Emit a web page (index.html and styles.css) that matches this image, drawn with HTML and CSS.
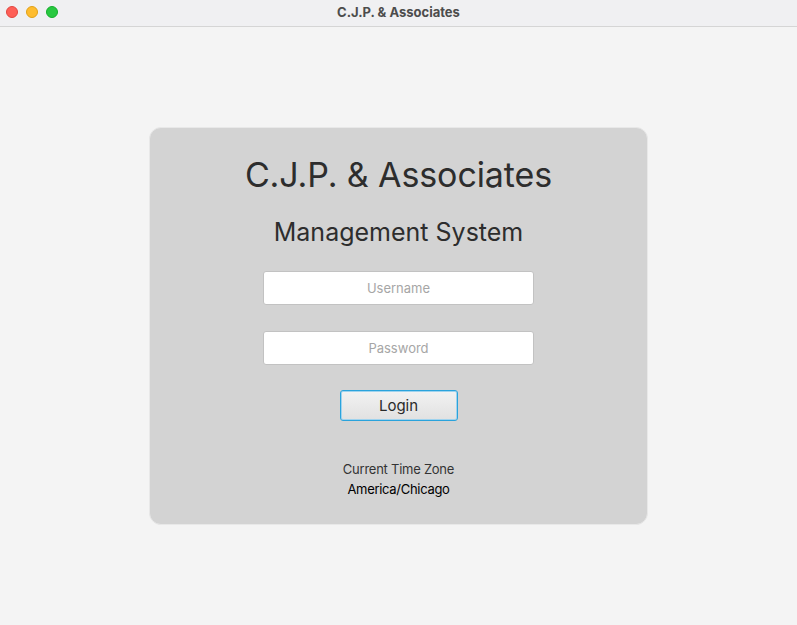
FILE: index.html
```html
<!DOCTYPE html>
<html>
<head>
<meta charset="utf-8">
<link rel="stylesheet" href="styles.css">
</head>
<body>
<div class="window">
  <div class="titlebar">
    <div class="lights">
      <span class="light red"></span>
      <span class="light yellow"></span>
      <span class="light green"></span>
    </div>
    <div class="wtitle">C.J.P. &amp; Associates</div>
  </div>
  <div class="content">
    <div class="card">
      <div class="title">C.J.P. &amp; Associates</div>
      <div class="subtitle">Management System</div>
      <input class="field user" type="text" placeholder="Username">
      <input class="field pass" type="password" placeholder="Password">
      <button class="login">Login</button>
      <div class="tzlabel">Current Time Zone</div>
      <div class="tz">America/Chicago</div>
    </div>
  </div>
</div>
</body>
</html>
```
FILE: styles.css
```css
html, body {
  margin: 0;
  padding: 0;
}
body {
  font-family: "Inter", "Roboto", sans-serif;
  background: #f4f4f4;
}
.window {
  width: 797px;
  height: 625px;
  display: flex;
  flex-direction: column;
}
.titlebar {
  height: 26px;
  background: #f0f0f2;
  border-bottom: 1px solid #d5d5d5;
  display: flex;
  align-items: center;
  justify-content: center;
  position: relative;
}
.lights {
  position: absolute;
  left: 6px;
  top: 6px;
  display: flex;
  gap: 8px;
}
.light {
  width: 12px;
  height: 12px;
  border-radius: 50%;
  box-sizing: border-box;
}
.red { background: #fe5f57; border: 0.5px solid #e2463f; }
.yellow { background: #febc2e; border: 0.5px solid #e1a116; }
.green { background: #28c840; border: 0.5px solid #14ae2b; }
.wtitle {
  font-size: 13px;
  font-weight: 700;
  color: #4c4c4c;
  margin-top: -2px;
}
.content {
  flex: 1;
  display: flex;
  align-items: center;
  justify-content: center;
  background: #f4f4f4;
}
.card {
  width: 499px;
  height: 398px;
  box-sizing: border-box;
  background: #d3d3d3;
  border: 1px solid #e8e8e8;
  border-radius: 12px;
  display: flex;
  flex-direction: column;
  align-items: center;
  padding-top: 25px;
}
.title {
  font-size: 34px;
  line-height: 44px;
  color: #2d2d2d;
  letter-spacing: -0.1px;
}
.subtitle {
  font-size: 25px;
  line-height: 32px;
  color: #2d2d2d;
  margin-top: 19px;
}
.field {
  width: 271px;
  height: 34px;
  box-sizing: border-box;
  border: 1px solid #c2c2c2;
  border-radius: 3px;
  background: #fff;
  text-align: center;
  font-family: "Inter", "Roboto", sans-serif;
  font-size: 13px;
  color: #222;
  outline: none;
}
.field::placeholder {
  color: #a6a6a6;
}
.user { margin-top: 23px; }
.pass { margin-top: 26px; }
.login {
  margin-top: 25px;
  width: 118px;
  height: 31px;
  box-sizing: border-box;
  border: 1px solid #2aa3dc;
  box-shadow: 0 0 0 1px #9fd3ee inset;
  border-radius: 3px;
  background: linear-gradient(#f2f2f2, #e1e1e1);
  font-family: "Inter", "Roboto", sans-serif;
  font-size: 15px;
  color: #2a2a2a;
  padding: 0;
}
.tzlabel {
  margin-top: 39px;
  font-size: 13px;
  line-height: 18px;
  color: #333;
  letter-spacing: -0.25px;
}
.tz {
  margin-top: 2px;
  font-size: 13px;
  line-height: 18px;
  color: #000;
  letter-spacing: -0.3px;
}
```
